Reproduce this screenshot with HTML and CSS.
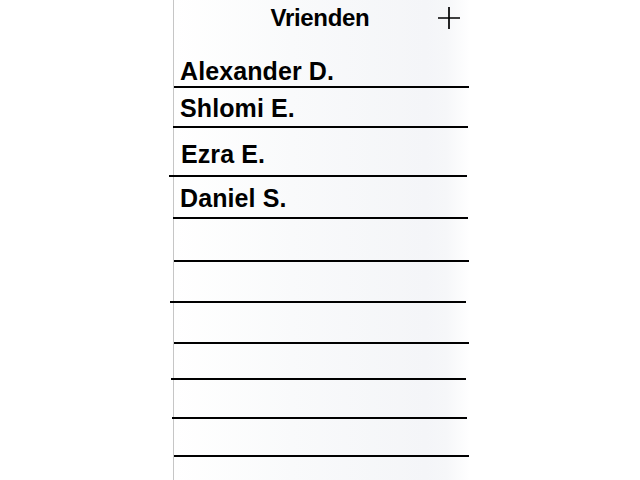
FILE: index.html
```html
<!DOCTYPE html>
<html lang="nl">
<head>
<meta charset="utf-8">
<title>Vrienden</title>
<link rel="stylesheet" href="styles.css">
</head>
<body>
<div class="panel">
  <header class="header">
    <span></span>
    <h1 class="title">Vrienden</h1>
    <button class="add" aria-label="Toevoegen">
      <svg width="24" height="24" viewBox="0 0 24 24"><path d="M12 1v22M1 12h22" stroke="#000" stroke-width="1.7" fill="none"/></svg>
    </button>
  </header>
  <ul class="list">
    <li class="row"><span class="name">Alexander D.</span><div class="rule"></div></li>
    <li class="row"><span class="name">Shlomi E.</span><div class="rule"></div></li>
    <li class="row"><span class="name">Ezra E.</span><div class="rule"></div></li>
    <li class="row"><span class="name">Daniel S.</span><div class="rule"></div></li>
    <li class="row"><span class="name"></span><div class="rule"></div></li>
    <li class="row"><span class="name"></span><div class="rule"></div></li>
    <li class="row"><span class="name"></span><div class="rule"></div></li>
    <li class="row"><span class="name"></span><div class="rule"></div></li>
    <li class="row"><span class="name"></span><div class="rule"></div></li>
    <li class="row"><span class="name"></span><div class="rule"></div></li>
  </ul>
</div>
</body>
</html>
```
FILE: styles.css
```css
html, body {
  margin: 0;
  padding: 0;
  background: #fff;
  height: 480px;
  overflow: hidden;
}
body {
  font-family: "Liberation Sans", Arial, sans-serif;
  color: #000;
}
.panel {
  margin-left: 173px;
  width: 296px;
  height: 480px;
  border-left: 1px solid #c6c6c6;
  background: linear-gradient(to right, #ffffff 0%, #f9fafb 40%, #f4f5f8 85%, #f6f7f9 92%, #ffffff 100%);
}
.header {
  height: 44px;
  display: grid;
  grid-template-columns: 1fr auto 1fr;
  align-items: start;
}
.title {
  margin: 0 0 0 -4px;
  padding-top: 6px;
  font-size: 24px;
  line-height: 24px;
  font-weight: bold;
  letter-spacing: -0.3px;
}
.add {
  justify-self: end;
  margin: 6px 9px 0 0;
  padding: 0;
  border: 0;
  background: none;
  width: 24px;
  height: 24px;
  display: flex;
}
.list {
  list-style: none;
  margin: 0;
  padding: 0;
}
.row {
  display: flex;
  flex-direction: column;
  justify-content: flex-end;
}
.name {
  font-size: 25px;
  line-height: 25px;
  font-weight: bold;
  padding-left: 6px;
  letter-spacing: 0.1px;
}
.rule {
  height: 2px;
  background: #000;
  width: 295px;
}
.row:nth-child(1) { height: 44px; }
.row:nth-child(1) .name { padding-bottom: 2px; }
.row:nth-child(2) { height: 40px; }
.row:nth-child(2) .name { padding-bottom: 5px; }
.row:nth-child(2) .rule { margin-left: -1px; }
.row:nth-child(3) { height: 49px; }
.row:nth-child(3) .name { padding-bottom: 8px; padding-left: 7px; }
.row:nth-child(3) .rule { margin-left: -5px; width: 298px; }
.row:nth-child(4) { height: 42px; }
.row:nth-child(4) .name { padding-bottom: 6px; }
.row:nth-child(4) .rule { margin-left: -1px; }
.row:nth-child(5) { height: 43px; }
.row:nth-child(6) { height: 41px; }
.row:nth-child(6) .rule { margin-left: -4px; width: 296px; }
.row:nth-child(7) { height: 41px; }
.row:nth-child(8) { height: 36px; }
.row:nth-child(8) .rule { margin-left: -3px; }
.row:nth-child(9) { height: 39px; }
.row:nth-child(9) .rule { margin-left: -2px; }
.row:nth-child(10) { height: 38px; }
```
